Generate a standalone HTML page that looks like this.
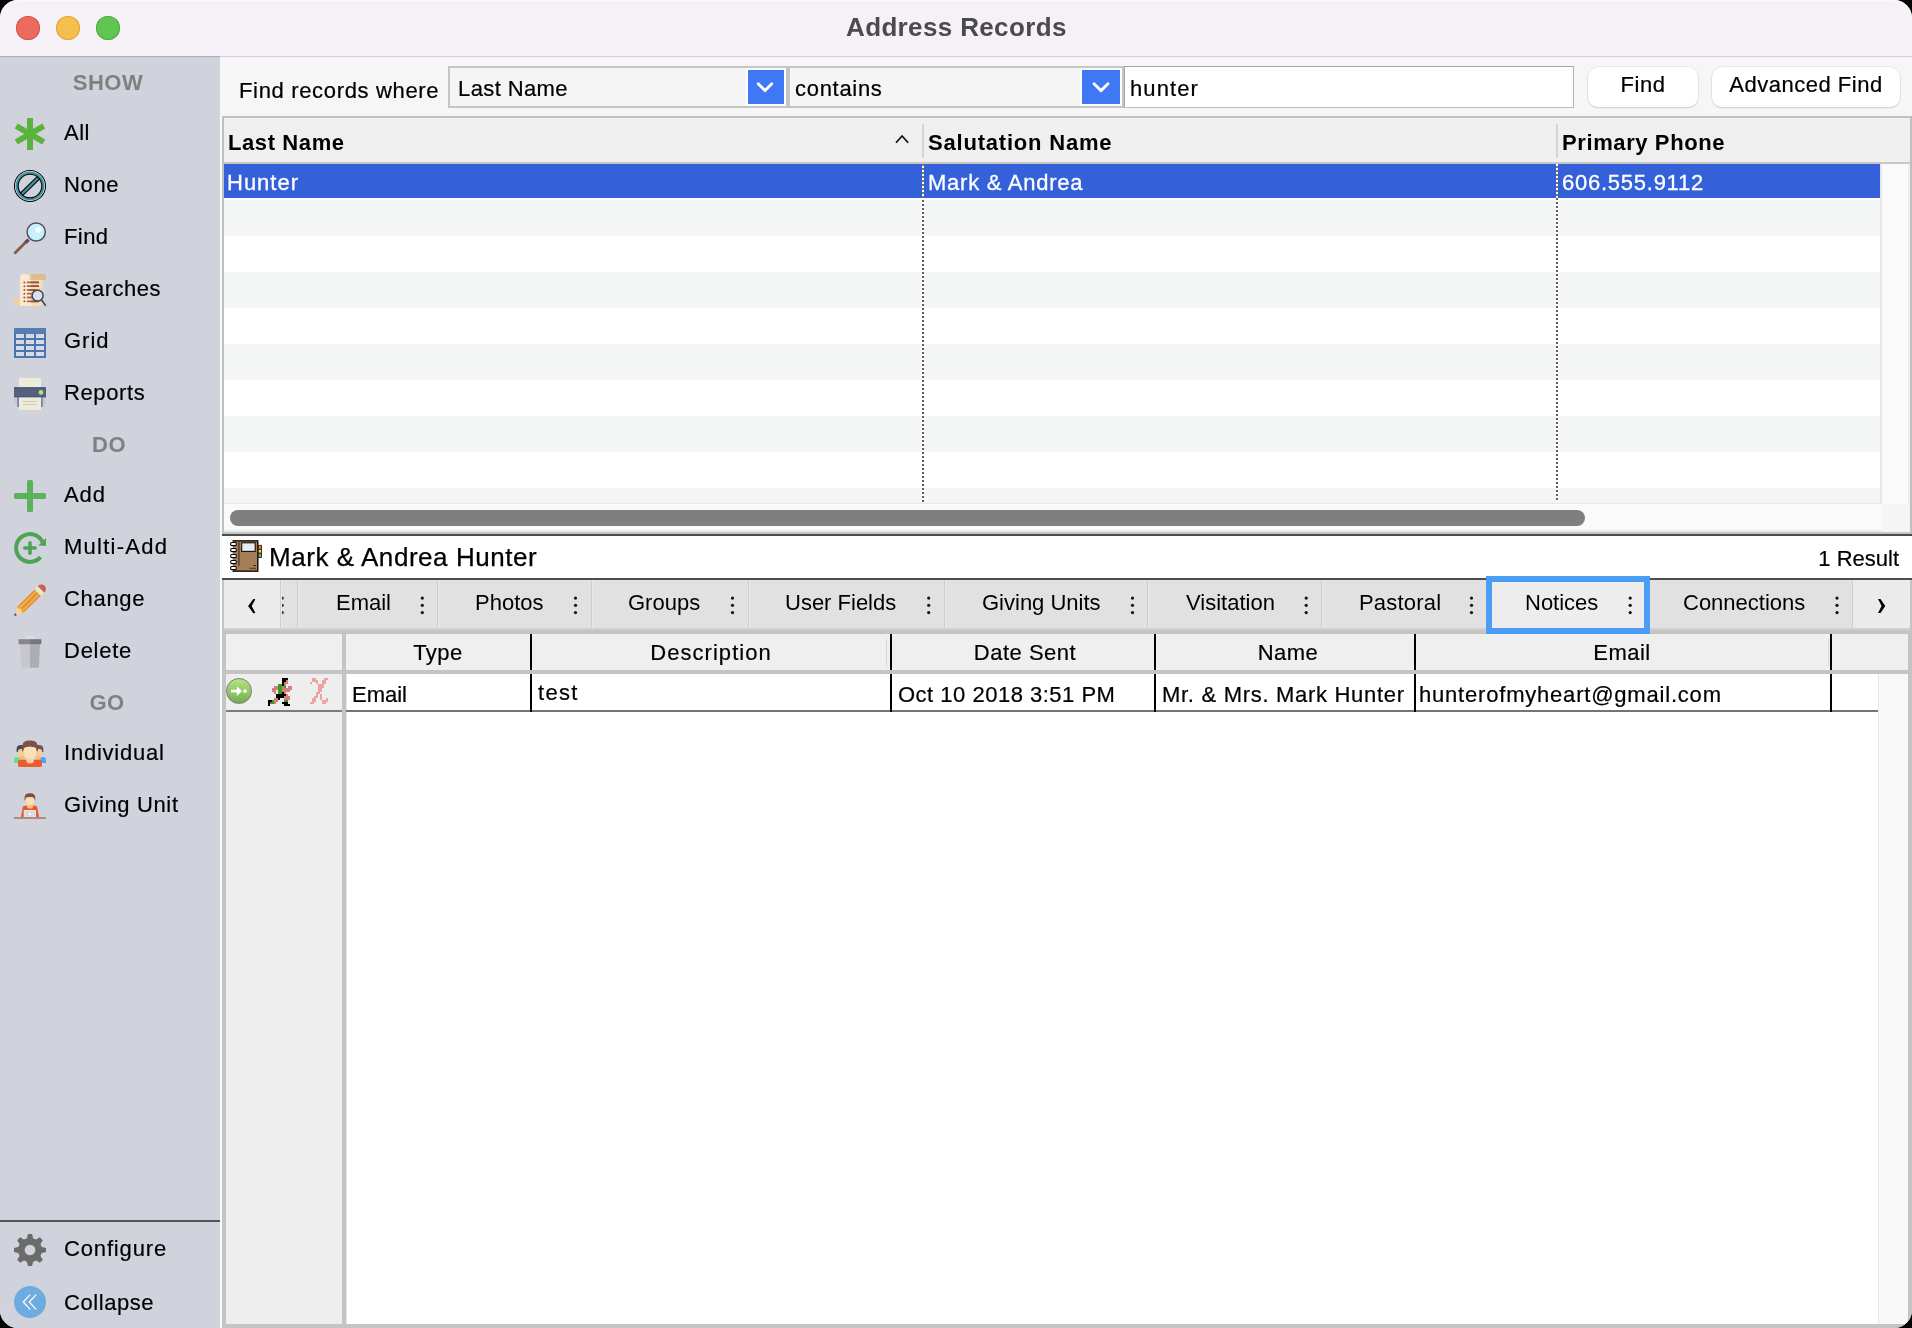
<!DOCTYPE html>
<html>
<head>
<meta charset="utf-8">
<title>Address Records</title>
<style>
*{box-sizing:border-box;margin:0;padding:0}
html,body{width:1912px;height:1328px;overflow:hidden;background:#000}
body{font-family:"Liberation Sans",sans-serif;color:#000;position:relative}
#win{will-change:transform;position:absolute;left:0;top:0;width:1912px;height:1328px;border-radius:18px;overflow:hidden;background:#efefef}
.a{position:absolute}
.t{position:absolute;white-space:nowrap;line-height:1}
/* title bar */
#tb{left:0;top:0;width:1912px;height:56px;background:linear-gradient(#fcfbfc 0,#f5f1f7 2px,#f5f1f7 100%)}
#tbl{left:0;top:56px;width:1912px;height:1px;background:linear-gradient(90deg,#a7aebb 0,#a7aebb 220px,#d2d2d2 220px)}
.dot{position:absolute;top:16px;width:24px;height:24px;border-radius:50%}
/* sidebar */
#sb{left:0;top:57px;width:220px;height:1271px;background:#d0d3dc}
.sh{position:absolute;white-space:nowrap;line-height:1;font-weight:bold;font-size:22px;color:#808080;letter-spacing:.5px}
.si{position:absolute;left:64px;white-space:nowrap;line-height:1;font-size:22px;color:#000;-webkit-text-stroke:.2px #000}
.ic{position:absolute;left:14px;width:32px;height:32px}
/* main */
#findbar{left:220px;top:57px;width:1692px;height:60px;background:#f6f6f6}

.fb{font-size:22px;-webkit-text-stroke:.22px #000}
.sel{background:#f5f5f5;border:2px solid #c6c6c6;box-shadow:inset 0 0 0 1px #fbfbfb}
.bbtn{background:#3f78f5}
.pbtn{background:#fff;border-radius:10px;box-shadow:0 0 0 .5px #dcdcdc,0 1px 1.5px rgba(0,0,0,.22)}
.dot1{width:2px;background:repeating-linear-gradient(#5e5e5e 0,#5e5e5e 2px,#fff 2px,#fff 4px)}
.dot2{width:2px;background:repeating-linear-gradient(#7d7560 0,#7d7560 2px,#fff 2px,#fff 4px)}
.lh{font-size:22px;font-weight:bold;letter-spacing:.6px}
.lr{font-size:22px;color:#fff;letter-spacing:1px;-webkit-text-stroke:.3px #fff}
.tdv{top:580px;width:2px;height:48px;background:linear-gradient(90deg,#cdcdcd 0,#cdcdcd 50%,#e9e9e9 50%)}
.tt{top:592px;font-size:22px}
.gv{top:634px;width:2px;height:36px;background:#000}
.gv2{top:674px;width:2px;height:38px;background:#000}
.gh{top:642px;font-size:22px;text-align:center;letter-spacing:.5px;-webkit-text-stroke:.2px #000}
.gr{top:684px;font-size:22px;letter-spacing:.7px;-webkit-text-stroke:.22px #000}
</style>
</head>
<body>
<div id="win">
<!-- TITLEBAR -->
<div id="tb" class="a"></div>
<div id="tbl" class="a"></div>
<div class="dot" style="left:16px;background:#ed6a5e;box-shadow:inset 0 0 0 1px #d9564a"></div>
<div class="dot" style="left:56px;background:#f5bf4f;box-shadow:inset 0 0 0 1px #dfa63a"></div>
<div class="dot" style="left:96px;background:#61c554;box-shadow:inset 0 0 0 1px #4cae3f"></div>
<div class="t" id="title" style="left:846px;top:14px;font-size:26px;font-weight:bold;color:#4b4a4d;letter-spacing:.36px">Address Records</div>

<!-- SIDEBAR -->
<div id="sb" class="a"></div>
<!--SB0--><div class="sh" style="left:0;width:216px;text-align:center;top:72px">SHOW</div>
<div class="sh" style="left:0;width:218px;text-align:center;top:434px">DO</div>
<div class="sh" style="left:0;width:214px;text-align:center;top:692px">GO</div>
<div class="si" style="top:122px;letter-spacing:0.5px">All</div>
<div class="si" style="top:174px;letter-spacing:0.67px">None</div>
<div class="si" style="top:226px;letter-spacing:0.4px">Find</div>
<div class="si" style="top:278px;letter-spacing:0.5px">Searches</div>
<div class="si" style="top:330px;letter-spacing:1px">Grid</div>
<div class="si" style="top:382px;letter-spacing:0.6px">Reports</div>
<div class="si" style="top:484px;letter-spacing:0.95px">Add</div>
<div class="si" style="top:536px;letter-spacing:1.25px">Multi-Add</div>
<div class="si" style="top:588px;letter-spacing:0.68px">Change</div>
<div class="si" style="top:640px;letter-spacing:0.74px">Delete</div>
<div class="si" style="top:742px;letter-spacing:0.78px">Individual</div>
<div class="si" style="top:794px;letter-spacing:0.64px">Giving Unit</div>
<div class="a" style="left:0;top:1220px;width:220px;height:2px;background:#555557"></div>
<div class="si" style="top:1238px;letter-spacing:0.84px">Configure</div>
<div class="si" style="top:1292px;letter-spacing:0.57px">Collapse</div>
<svg class="a" style="left:0;top:0" width="220" height="1328" viewBox="0 0 220 1328">
<!-- All -->
<g stroke="#5ab33c" stroke-width="6" stroke-linecap="butt">
<line x1="30" y1="118" x2="30" y2="150"/>
<line x1="16.2" y1="126" x2="43.8" y2="142"/>
<line x1="16.2" y1="142" x2="43.8" y2="126"/>
</g>
<!-- None -->
<g fill="none">
<line x1="21.44" y1="194.41" x2="38.56" y2="177.59" stroke="#000" stroke-width="4.400"/>
<line x1="21.01" y1="194.83" x2="38.99" y2="177.17" stroke="#418e9d" stroke-width="2.400"/>
<circle cx="30" cy="186" r="15.5" stroke="#000" stroke-width="1.1"/>
<circle cx="30" cy="186" r="14.6" stroke="#a5e3ea" stroke-width="0.9"/>
<circle cx="30" cy="186" r="13.2" stroke="#418e9d" stroke-width="2.2"/>
<circle cx="30" cy="186" r="11.8" stroke="#000" stroke-width="1.1"/>
</g>
<!-- Find -->
<line x1="27.2" y1="240.8" x2="15.2" y2="252.8" stroke="#8c5a4d" stroke-width="2.900" stroke-linecap="round"/>
<line x1="28.6" y1="239.6" x2="25.6" y2="242.6" stroke="#5c4a5e" stroke-width="3.4"/>
<circle cx="36.200" cy="232" r="9.100" fill="#c4f1fb" stroke="#5a4a62" stroke-width="1.500"/>
<circle cx="38.2" cy="229.8" r="2.9" fill="#fff"/>
<!-- Searches -->
<path d="M31 280 h11.400 v23.500 q0 2.500 -2.500 2.500 h-8.900z" fill="#f9dcb5"/>
<path d="M20 277.200 q0 -3.200 3.200 -3.200 h2.800 q3.500 0 3.500 3.500 v2.500 h1.500 v26 h-11z" fill="#fbead0"/>
<path d="M26 274 h17.500 q2.500 0 2.500 2.500 v3.500 h-16.500 v-2.500 q0 -3.500 -3.500 -3.500z" fill="#f1d3a6"/>
<path d="M31 274 h12.500 q2.500 0 2.500 2.500 v3.500 h-15z" fill="#e0bc8d"/>
<path d="M14 298.500 h6 v7.500 h-2.800 q-3.200 0 -3.200 -3.200z" fill="#f3d0a0"/>
<g stroke="#a8694d" stroke-width="1.800" stroke-linecap="round">
<line x1="27.600" y1="282.400" x2="38.200" y2="282.400"/><line x1="27.600" y1="286.200" x2="38.200" y2="286.200"/>
<line x1="27.600" y1="290" x2="35" y2="290"/><line x1="27.600" y1="293.700" x2="33" y2="293.700"/>
<line x1="27.600" y1="297.500" x2="33" y2="297.500"/><line x1="27.600" y1="301.300" x2="38" y2="301.300"/>
</g>
<g stroke="#97583e" stroke-width="1.800" stroke-linecap="round">
<line x1="31.500" y1="282.400" x2="38.200" y2="282.400"/><line x1="31.500" y1="286.200" x2="38.200" y2="286.200"/>
<line x1="31.500" y1="290" x2="35" y2="290"/><line x1="31.500" y1="301.300" x2="38" y2="301.300"/>
</g>
<g fill="#97583e"><circle cx="24.400" cy="282.400" r="1"/><circle cx="24.400" cy="286.200" r="1"/><circle cx="24.400" cy="290" r="1"/><circle cx="24.400" cy="293.700" r="1"/><circle cx="24.400" cy="297.500" r="1"/><circle cx="24.400" cy="301.300" r="1"/></g>
<line x1="41.500" y1="300" x2="45.400" y2="305.200" stroke="#454b54" stroke-width="1.700" stroke-linecap="round"/>
<circle cx="37.600" cy="295.600" r="5.500" fill="#dce1f2" stroke="#454b54" stroke-width="1.600"/>
<!-- Grid -->
<rect x="14" y="328" width="32" height="30" fill="#4a74ae"/>
<rect x="14" y="328" width="32" height="5.500" fill="#567eb4"/>
<g fill="#d5d9e2" stroke="#e6e7ec" stroke-width="0.800">
<rect x="16.400" y="334.400" width="7.200" height="3.200"/><rect x="26.400" y="334.400" width="7.200" height="3.200"/><rect x="36.400" y="334.400" width="7.200" height="3.200"/>
<rect x="16.400" y="340.400" width="7.200" height="3.200"/><rect x="26.400" y="340.400" width="7.200" height="3.200"/><rect x="36.400" y="340.400" width="7.200" height="3.200"/>
<rect x="16.400" y="346.400" width="7.200" height="3.200"/><rect x="26.400" y="346.400" width="7.200" height="3.200"/><rect x="36.400" y="346.400" width="7.200" height="3.200"/>
<rect x="16.400" y="352.400" width="7.200" height="3.200"/><rect x="26.400" y="352.400" width="7.200" height="3.200"/><rect x="36.400" y="352.400" width="7.200" height="3.200"/>
</g>
<!-- Reports -->
<rect x="19" y="378" width="22" height="10" fill="#edebda"/>
<rect x="14" y="397" width="3.500" height="8" fill="#c9cbc6"/><rect x="42.500" y="397" width="3.500" height="8" fill="#c9cbc6"/>
<rect x="17.200" y="397" width="2" height="10" fill="#7583c0"/><rect x="40.800" y="397" width="2" height="10" fill="#7583c0"/>
<rect x="19" y="397" width="22" height="13" fill="#edebda"/>
<rect x="14" y="387.300" width="32" height="9.900" fill="#555f80"/>
<rect x="14" y="387.300" width="32" height="1.200" fill="#4a5478"/><rect x="14" y="396" width="32" height="1.200" fill="#4a5478"/>
<circle cx="41" cy="392.400" r="2.300" fill="#aeea6a"/>
<rect x="23" y="401.100" width="14" height="1" fill="#cfcaa8"/><rect x="23" y="404" width="14" height="1" fill="#cfcaa8"/>
<!-- Add -->
<rect x="14" y="493" width="32" height="6" rx="1.500" fill="#5cb25a"/>
<rect x="27" y="480" width="6" height="32" rx="1.500" fill="#5cb25a"/>
<!-- Multi-Add -->
<path d="M42.640 542.210 A13.900 13.900 0 1 0 40.490 557.120" fill="none" stroke="#4ea356" stroke-width="4"/>
<path d="M46 538 L46 546 L38.300 545.600 Z" fill="#4ea356"/>
<g stroke="#4ea356" stroke-width="3.500" stroke-linecap="round"><line x1="24.800" y1="548" x2="35.200" y2="548"/><line x1="30" y1="542.800" x2="30" y2="553.200"/></g>
<!-- Change (pencil) -->
<g transform="translate(14 616) rotate(-44.500)">
<path d="M0 0 L9.500 -4.500 L9.500 4.500 Z" fill="#f7cfa4"/>
<path d="M0 0 L2.800 -1.300 L2.800 1.300 Z" fill="#3d4650"/>
<rect x="9.500" y="-4.500" width="24" height="9" fill="#e8913a"/>
<path d="M7.800 -4.500 L11 -4.500 L9.500 -1.600 L11.600 0 L9.500 1.600 L11 4.500 L7.800 4.500 L8.400 1.600 L10 0 L8.400 -1.600Z" fill="#e5b93a"/>
<rect x="10.500" y="-2.500" width="23" height="1.100" fill="#e8c555"/><rect x="10.500" y="1.400" width="23" height="1.100" fill="#e8c555"/>
<rect x="33.500" y="-4.500" width="4.500" height="9" fill="#d9dbd2"/>
<rect x="33.500" y="-4.500" width="1.100" height="9" fill="#f7f0c0"/><rect x="35.600" y="-4.500" width="1.100" height="9" fill="#f7f0c0"/>
<path d="M38 -4.500 h0.500 a4.500 4.500 0 0 1 0 9 h-0.500z" fill="#cc5e4e"/>
</g>
<!-- Delete -->
<rect x="25.300" y="636" width="9.200" height="3.500" fill="#dcdcdc"/>
<path d="M19.900 644 H30 V667.800 H21.300Z" fill="#c8c7cc"/><path d="M30 644 H40 L38.900 667.800 H30Z" fill="#aeadb3"/>
<rect x="18.500" y="639.200" width="11.500" height="5" fill="#86868e"/><rect x="30" y="639.200" width="11.300" height="5" fill="#767480"/>
<!-- Individual -->
<path d="M14 763 v-3 q0 -3 3 -3 h3 l3 2 v4z" fill="#62e08e"/>
<path d="M46 763 v-3 q0 -3 -3 -3 h-3 l-3 2 v4z" fill="#4aa3f7"/>
<path d="M16.600 752 v-3 q0 -4 4 -4 h3 v7z" fill="#4a4761"/><path d="M43.400 752 v-3 q0 -4 -4 -4 h-3 v7z" fill="#735560"/>
<rect x="18" y="749" width="7" height="9" rx="2.500" fill="#f8cd95"/><rect x="35" y="749" width="7" height="9" rx="2.500" fill="#f8cd95"/>
<rect x="19.500" y="756" width="5" height="4" fill="#f4b98a"/><rect x="35.500" y="756" width="5" height="4" fill="#f4b98a"/>
<rect x="18" y="759.800" width="24" height="7.200" rx="2" fill="#ec5a2e"/>
<path d="M26.300 757 h7.500 v4 q0 2.500 -3.750 2.500 q-3.750 0 -3.750 -2.500z" fill="#f8d2a4"/>
<path d="M22 751.500 v-4 q0 -7 7 -7 h2 q7 0 7 7 v4 q-1.500 0 -2 -3.500 q-6 -2.500 -12 0 q-0.500 3.500 -2 3.500z" fill="#7d5145"/>
<path d="M23.900 748.200 q6 -2.800 12.100 0 v5 q0 5.300 -6.050 5.300 q-6.050 0 -6.050 -5.300z" fill="#fbe2b6"/>
<!-- Giving Unit -->
<path d="M22.500 808.500 q0 -2.700 2.700 -2.700 h9.600 q2.700 0 2.700 2.700 l1.500 8.500 h-18z" fill="#ec5829"/>
<path d="M27 803 h6 v3.500 q0 2 -3 2 q-3 0 -3 -2z" fill="#f6c18d"/>
<path d="M24.500 800.500 v-2.300 q0 -5 5 -5 h0.800 q5 0 5 5 v2.300 q-1 0 -1.300 -2.500 q-4.100 -1.600 -8.200 0 q-0.300 2.500 -1.300 2.500z" fill="#7b4f44"/>
<path d="M25.800 798 q4.200 -1.800 8.400 0 v3 q0 4 -4.200 4 q-4.200 0 -4.200 -4z" fill="#fbe0ae"/>
<rect x="23.700" y="810" width="12.300" height="7" fill="#dde6f0"/><rect x="24.700" y="811" width="10.300" height="5.500" fill="#d8dbe2"/>
<rect x="29" y="813" width="2" height="2" fill="#fff"/>
<rect x="14" y="817" width="32" height="2" fill="#b08983"/>
<!-- Configure gear -->
<g fill="#6b6b6b" transform="translate(30 1250)">
<path d="M-3.300 -11 L-2.100 -16 H2.100 L3.300 -11Z"/>
<path transform="rotate(45)" d="M-3.300 -11 L-2.100 -16 H2.100 L3.300 -11Z"/><path transform="rotate(90)" d="M-3.300 -11 L-2.100 -16 H2.100 L3.300 -11Z"/><path transform="rotate(135)" d="M-3.300 -11 L-2.100 -16 H2.100 L3.300 -11Z"/>
<path transform="rotate(180)" d="M-3.300 -11 L-2.100 -16 H2.100 L3.300 -11Z"/><path transform="rotate(225)" d="M-3.300 -11 L-2.100 -16 H2.100 L3.300 -11Z"/><path transform="rotate(270)" d="M-3.300 -11 L-2.100 -16 H2.100 L3.300 -11Z"/><path transform="rotate(315)" d="M-3.300 -11 L-2.100 -16 H2.100 L3.300 -11Z"/>
<path fill-rule="evenodd" d="M0 -12 A12 12 0 1 0 0.010 -12Z M0 -5.300 A5.300 5.300 0 1 1 -0.010 -5.300Z"/>
</g>
<!-- Collapse -->
<circle cx="30" cy="1302" r="16" fill="#6eacdf"/>
<g fill="none" stroke="#fff" stroke-width="1.200" stroke-linecap="round" stroke-linejoin="round">
<path d="M29.900 1294.900 L23.300 1302 L29.900 1309.200"/><path d="M35.900 1294.900 L29.300 1302 L35.900 1309.200"/>
</g>
</svg>
<!--SB1-->

<div class="a" style="left:220px;top:116px;width:2px;height:1212px;background:#fafafa"></div>
<!-- FINDBAR -->
<div id="findbar" class="a"></div>
<!--M0--><!-- find bar -->
<div class="t fb" style="left:239px;top:80px;letter-spacing:.66px">Find records where</div>
<div class="a" style="left:448px;top:66px;width:676px;height:42px;background:#f5f5f5;border:2px solid #c5c5c5"></div>
<div class="a" style="left:786px;top:68px;width:4px;height:38px;background:#c5c5c5"></div>
<div class="a" style="left:746px;top:68px;width:40px;height:38px;background:#fefefe"></div>
<div class="a" style="left:1080px;top:68px;width:42px;height:38px;background:#fefefe"></div>
<div class="t fb" style="left:458px;top:78px;letter-spacing:.4px">Last Name</div>
<div class="a bbtn" style="left:748px;top:70px;width:36px;height:34px"><svg width="36" height="34" viewBox="0 0 36 34"><path d="M10.200 13.700 L17 20.600 L23.800 13.700" fill="none" stroke="#fff" stroke-width="2.900" stroke-linecap="round" stroke-linejoin="round"/></svg></div>
<div class="t fb" style="left:795px;top:78px;letter-spacing:.7px">contains</div>
<div class="a bbtn" style="left:1082px;top:70px;width:38px;height:34px"><svg width="38" height="34" viewBox="0 0 38 34"><path d="M12 13.700 L19 20.600 L26 13.700" fill="none" stroke="#fff" stroke-width="2.900" stroke-linecap="round" stroke-linejoin="round"/></svg></div>
<div class="a" style="left:1124px;top:66px;width:450px;height:42px;background:#fff;border:1.500px solid #a6a6a6;border-bottom-color:#bcbcbc;border-right-color:#b4b4b4"></div>
<div class="t fb" style="left:1130px;top:78px;letter-spacing:1.100px">hunter</div>
<div class="a pbtn" style="left:1588px;top:67px;width:110px;height:40px"></div>
<div class="t fb" style="left:1588px;width:110px;text-align:center;top:74px;letter-spacing:.5px;padding-left:0px">Find</div>
<div class="a pbtn" style="left:1712px;top:67px;width:188px;height:40px"></div>
<div class="t fb" style="left:1712px;width:188px;text-align:center;top:74px;letter-spacing:.5px">Advanced Find</div>

<!-- list -->
<div class="a" style="left:222px;top:116px;width:1690px;height:418px;background:#c0c0c0"></div>
<div class="a" style="left:224px;top:118px;width:1686px;height:45px;background:#efefef;border-top:1px solid #f4f4f4"></div>
<div class="a" style="left:224px;top:162px;width:1686px;height:2px;background:#c9c8c6"></div>
<div class="a" style="left:224px;top:164px;width:1656px;height:340px;background:repeating-linear-gradient(#fff 0,#fff 36px,#f4f5f5 36px,#f4f5f5 72px)"></div>
<div class="a" style="left:224px;top:164px;width:1656px;height:34px;background:#3461d9"></div>
<div class="a" style="left:1880px;top:164px;width:30px;height:340px;background:#fafafa;border-left:2px solid #e8e8e8;border-right:2px solid #eeeeee"></div>
<div class="a" style="left:224px;top:503px;width:1658px;height:29px;background:#fafafa;border-top:1px solid #e8e8e8"></div>
<div class="a" style="left:224px;top:530px;width:1658px;height:2px;background:#ececec"></div><div class="a" style="left:1882px;top:504px;width:28px;height:28px;background:#f5f5f5"></div><div class="a" style="left:224px;top:532px;width:1686px;height:2px;background:#c6c6c6"></div>
<div class="a" style="left:230px;top:510px;width:1355px;height:16px;border-radius:8px;background:#7f7f7f"></div>
<div class="a" style="left:922px;top:124px;width:2px;height:34px;background:#d4d4d4"></div>
<div class="a" style="left:1556px;top:124px;width:2px;height:34px;background:#d4d4d4"></div>
<div class="a dot1" style="left:922px;top:164px;height:338px"></div>
<div class="a" style="left:1556px;top:164px;height:338px;width:2px;background:repeating-linear-gradient(#fff 0,#fff 2px,#5e5e5e 2px,#5e5e5e 4px)"></div>
<div class="a dot2" style="left:922px;top:164px;height:34px"></div>
<div class="a" style="left:1556px;top:164px;height:34px;width:2px;background:repeating-linear-gradient(#fff 0,#fff 2px,#7d7560 2px,#7d7560 4px)"></div>
<div class="t lh" style="left:228px;top:132px">Last Name</div>
<div class="t lh" style="left:928px;top:132px;letter-spacing:.8px">Salutation Name</div>
<div class="t lh" style="left:1562px;top:132px">Primary Phone</div>
<svg class="a" style="left:894px;top:133px" width="16" height="12" viewBox="0 0 16 12"><path d="M2 9.800 L8.100 3 L14.200 9.800" fill="none" stroke="#111" stroke-width="1.700" stroke-linejoin="miter"/></svg>
<div class="t lr" style="left:227px;top:172px">Hunter</div>
<div class="t lr" style="left:928px;top:172px;letter-spacing:.75px">Mark &amp; Andrea</div>
<div class="t lr" style="left:1562px;top:172px;letter-spacing:.75px">606.555.9112</div>

<!-- name bar -->
<div class="a" style="left:222px;top:534px;width:1690px;height:2px;background:#4c4c4c"></div>
<div class="a" style="left:222px;top:536px;width:1690px;height:42px;background:#fff"></div>
<div class="a" style="left:222px;top:578px;width:1690px;height:2px;background:#4c4c4c"></div>
<div class="t" style="left:269px;top:544px;font-size:26px;letter-spacing:.55px;-webkit-text-stroke:.25px #000">Mark &amp; Andrea Hunter</div>
<div class="t" style="right:13px;top:548px;font-size:22px;letter-spacing:0px;-webkit-text-stroke:.2px #000">1 Result</div>
<svg class="a" style="left:229px;top:539px" width="34" height="34" viewBox="229 539 34 34">
<rect x="258" y="545.300" width="3.500" height="4" fill="#f07a32" stroke="#1a1208" stroke-width=".8"/>
<rect x="258" y="549.300" width="3.500" height="3.900" fill="#fbd65c" stroke="#1a1208" stroke-width=".8"/>
<rect x="258" y="553.200" width="3.500" height="4.300" fill="#5cb85c" stroke="#1a1208" stroke-width=".8"/>
<rect x="232.800" y="540.300" width="25.500" height="31.400" fill="#a47f58"/>
<path d="M232.500 540.800 H257.800 V571.200 H232.500" fill="none" stroke="#000" stroke-width="1.200" stroke-linejoin="round"/>
<rect x="238.100" y="541.400" width="1.600" height="24.400" fill="#5a4330"/>
<rect x="241.700" y="542.800" width="13.500" height="8.600" fill="#e8ecee" stroke="#14100c" stroke-width="1.100"/>
<line x1="253.200" y1="565.500" x2="256" y2="565.500" stroke="#2e2014" stroke-width="1"/><line x1="249.500" y1="568.300" x2="256" y2="568.300" stroke="#4a331f" stroke-width="1"/>
<g fill="#fff" stroke="#000" stroke-width="1.100"><rect x="230.700" y="542.500" width="5.600" height="3.100" rx="1.100"/><rect x="230.700" y="548.500" width="5.600" height="3.100" rx="1.100"/><rect x="230.700" y="554.500" width="5.600" height="3.100" rx="1.100"/><rect x="230.700" y="560.500" width="5.600" height="3.100" rx="1.100"/><rect x="230.700" y="566.500" width="5.600" height="3.100" rx="1.100"/></g>
</svg>
<!--M1-->

<!-- LIST -->
<!--LIST-->

<!-- NAMEBAR -->
<!--NAMEBAR-->

<!-- TABS -->
<!--T0--><!-- tabs -->
<div class="a" style="left:222px;top:580px;width:1690px;height:54px;background:#c4c4c4"></div>
<div class="a" style="left:224px;top:580px;width:1686px;height:48px;background:#e1e1e1"></div>
<div class="a" style="left:224px;top:628px;width:1686px;height:2px;background:#d0d0d0"></div>
<div class="a" style="left:224px;top:580px;width:57px;height:48px;background:#ebebeb"></div>
<div class="a" style="left:1853px;top:580px;width:57px;height:48px;background:#ebebeb"></div>
<div class="a tdv" style="left:280px"></div><div class="a tdv" style="left:297px"></div><div class="a tdv" style="left:437px"></div><div class="a tdv" style="left:591px"></div><div class="a tdv" style="left:748px"></div><div class="a tdv" style="left:944px"></div><div class="a tdv" style="left:1147px"></div><div class="a tdv" style="left:1321px"></div><div class="a tdv" style="left:1852px"></div>
<div class="a" style="left:1486px;top:576px;width:164px;height:58px;background:#ededed;border:6px solid #4a9cf5"></div>
<div class="t tt" style="left:336px">Email</div><div class="t tt" style="left:475px">Photos</div><div class="t tt" style="left:628px">Groups</div><div class="t tt" style="left:785px">User Fields</div><div class="t tt" style="left:982px">Giving Units</div><div class="t tt" style="left:1186px">Visitation</div><div class="t tt" style="left:1359px;letter-spacing:.2px">Pastoral</div><div class="t tt" style="left:1525px">Notices</div><div class="t tt" style="left:1683px">Connections</div>
<svg class="a" style="left:222px;top:580px" width="1690" height="48" viewBox="222 580 1690 48">

<g fill="#111">
<circle cx="422.300" cy="598.100" r="1.600"/><circle cx="422.300" cy="605.300" r="1.600"/><circle cx="422.300" cy="612.600" r="1.600"/><circle cx="575.500" cy="598.100" r="1.600"/><circle cx="575.500" cy="605.300" r="1.600"/><circle cx="575.500" cy="612.600" r="1.600"/><circle cx="732.500" cy="598.100" r="1.600"/><circle cx="732.500" cy="605.300" r="1.600"/><circle cx="732.500" cy="612.600" r="1.600"/><circle cx="928.700" cy="598.100" r="1.600"/><circle cx="928.700" cy="605.300" r="1.600"/><circle cx="928.700" cy="612.600" r="1.600"/><circle cx="1132.500" cy="598.100" r="1.600"/><circle cx="1132.500" cy="605.300" r="1.600"/><circle cx="1132.500" cy="612.600" r="1.600"/><circle cx="1306.200" cy="598.100" r="1.600"/><circle cx="1306.200" cy="605.300" r="1.600"/><circle cx="1306.200" cy="612.600" r="1.600"/><circle cx="1471.500" cy="598.100" r="1.600"/><circle cx="1471.500" cy="605.300" r="1.600"/><circle cx="1471.500" cy="612.600" r="1.600"/><circle cx="1630.200" cy="598.100" r="1.600"/><circle cx="1630.200" cy="605.300" r="1.600"/><circle cx="1630.200" cy="612.600" r="1.600"/><circle cx="1837" cy="598.100" r="1.600"/><circle cx="1837" cy="605.300" r="1.600"/><circle cx="1837" cy="612.600" r="1.600"/>
<path d="M282.200 596.500 a1.600 1.600 0 0 1 0 3.200z M282.200 603.700 a1.600 1.600 0 0 1 0 3.200z M282.200 611 a1.600 1.600 0 0 1 0 3.200z"/>
</g>
<path d="M248.100 606.100 L253.300 599 L255.400 599.200 L251.700 606.100 L255.400 613 L253.300 613.200Z" fill="#000"/>
<path d="M1878 599.100 L1880.500 599.100 L1885.300 606 L1880.500 613 L1878 613 L1881.600 606Z" fill="#000"/>
</svg>
<!--T1-->

<!-- GRID -->
<!--G0--><!-- grid -->
<div class="a" style="left:222px;top:634px;width:1690px;height:694px;background:#c4c4c4"></div>
<div class="a" style="left:226px;top:634px;width:1682px;height:36px;background:#efefef"></div>
<div class="a" style="left:226px;top:674px;width:116px;height:650px;background:#eeeeee"></div>
<div class="a" style="left:346px;top:674px;width:1532px;height:650px;background:#fff;border-left:1px solid #e6e6e6"></div>
<div class="a" style="left:1878px;top:674px;width:30px;height:650px;background:#f8f8f8;border-left:1px solid #e8e8e8"></div>
<div class="a" style="left:226px;top:710px;width:116px;height:2px;background:#7c7c7c"></div>
<div class="a" style="left:346px;top:710px;width:1532px;height:2px;background:#747474"></div>
<div class="a" style="left:342px;top:634px;width:4px;height:36px;background:#c4c4c4"></div><div class="a gv" style="left:530px"></div><div class="a gv" style="left:890px"></div><div class="a gv" style="left:1154px"></div><div class="a gv" style="left:1414px"></div><div class="a gv" style="left:1830px"></div>
<div class="a gv2" style="left:530px"></div><div class="a gv2" style="left:890px"></div><div class="a gv2" style="left:1154px"></div><div class="a gv2" style="left:1414px"></div><div class="a gv2" style="left:1830px"></div>
<div class="a" style="left:886px;top:639px;width:1px;height:28px;background:#d4d4d4"></div><div class="a" style="left:1828px;top:639px;width:1px;height:28px;background:#d8d8d8"></div>
<div class="t gh" style="left:346px;width:184px">Type</div><div class="t gh" style="left:532px;width:358px;letter-spacing:1.05px">Description</div><div class="t gh" style="left:892px;width:266px">Date Sent</div><div class="t gh" style="left:1156px;width:264px">Name</div><div class="t gh" style="left:1416px;width:412px">Email</div>
<div class="t gr" style="left:352px;letter-spacing:0">Email</div><div class="t gr" style="left:538px;top:682px;letter-spacing:1.3px">test</div><div class="t gr" style="left:898px;letter-spacing:.5px">Oct 10 2018 3:51 PM</div><div class="t gr" style="left:1162px">Mr. &amp; Mrs. Mark Hunter</div><div class="t gr" style="left:1419px;letter-spacing:.8px">hunterofmyheart@gmail.com</div>
<div class="a" style="left:226.100px;top:678.100px;width:25.800px;height:25.800px;border-radius:50%;border:1px solid #7b7b80;background:linear-gradient(#b4e47e,#74ae50)"></div>
<svg class="a" style="left:226px;top:676px" width="110" height="32" viewBox="226 676 110 32">
<rect x="231" y="689.800" width="6.500" height="2.700" fill="#fff"/><path d="M236.900 686.200 L241.900 691.100 L236.900 696Z" fill="#fff"/><circle cx="245" cy="691.100" r="1.900" fill="#fff"/>
<g shape-rendering="crispEdges"><rect x="282" y="678" width="6" height="2" fill="#000"/><rect x="282" y="680" width="4" height="2" fill="#000"/><rect x="286" y="680" width="2" height="2" fill="#d4807c"/><rect x="282" y="682" width="2" height="2" fill="#000"/><rect x="284" y="682" width="4" height="2" fill="#d4807c"/><rect x="278" y="684" width="4" height="2" fill="#3a9a25"/><rect x="282" y="684" width="2" height="2" fill="#000"/><rect x="284" y="684" width="2" height="2" fill="#d4807c"/><rect x="274" y="686" width="4" height="2" fill="#d4807c"/><rect x="278" y="686" width="4" height="2" fill="#3a9a25"/><rect x="282" y="686" width="2" height="2" fill="#d4807c"/><rect x="284" y="686" width="2" height="2" fill="#3a9a25"/><rect x="288" y="686" width="4" height="2" fill="#d4807c"/><rect x="272" y="688" width="6" height="2" fill="#d4807c"/><rect x="278" y="688" width="4" height="2" fill="#3a9a25"/><rect x="282" y="688" width="10" height="2" fill="#d4807c"/><rect x="272" y="690" width="4" height="2" fill="#d4807c"/><rect x="278" y="690" width="4" height="2" fill="#3a9a25"/><rect x="282" y="690" width="8" height="2" fill="#d4807c"/><rect x="274" y="692" width="2" height="2" fill="#d4807c"/><rect x="278" y="692" width="4" height="2" fill="#3a9a25"/><rect x="282" y="692" width="2" height="2" fill="#000"/><rect x="284" y="692" width="2" height="2" fill="#d4807c"/><rect x="276" y="694" width="10" height="2" fill="#000"/><rect x="286" y="694" width="2" height="2" fill="#d4807c"/><rect x="276" y="696" width="8" height="2" fill="#000"/><rect x="284" y="696" width="6" height="2" fill="#d4807c"/><rect x="274" y="698" width="4" height="2" fill="#d4807c"/><rect x="278" y="698" width="2" height="2" fill="#000"/><rect x="284" y="698" width="6" height="2" fill="#d4807c"/><rect x="268" y="700" width="4" height="2" fill="#000"/><rect x="272" y="700" width="2" height="2" fill="#3a9a25"/><rect x="274" y="700" width="4" height="2" fill="#d4807c"/><rect x="284" y="700" width="4" height="2" fill="#3a9a25"/><rect x="268" y="702" width="2" height="2" fill="#000"/><rect x="270" y="702" width="4" height="2" fill="#3a9a25"/><rect x="274" y="702" width="2" height="2" fill="#d4807c"/><rect x="282" y="702" width="6" height="2" fill="#000"/><rect x="268" y="704" width="2" height="2" fill="#000"/><rect x="284" y="704" width="6" height="2" fill="#000"/><rect x="312" y="678" width="4" height="2" fill="#eea49c"/><rect x="324" y="678" width="4" height="2" fill="#eea49c"/><rect x="312" y="680" width="6" height="2" fill="#eea49c"/><rect x="322" y="680" width="4" height="2" fill="#eea49c"/><rect x="310" y="682" width="2" height="2" fill="#eea49c"/><rect x="316" y="682" width="2" height="2" fill="#eea49c"/><rect x="322" y="682" width="4" height="2" fill="#eea49c"/><rect x="318" y="684" width="6" height="2" fill="#eea49c"/><rect x="318" y="686" width="6" height="2" fill="#eea49c"/><rect x="318" y="688" width="4" height="2" fill="#eea49c"/><rect x="318" y="690" width="4" height="2" fill="#eea49c"/><rect x="316" y="692" width="4" height="2" fill="#eea49c"/><rect x="316" y="694" width="2" height="2" fill="#eea49c"/><rect x="320" y="694" width="2" height="2" fill="#eea49c"/><rect x="314" y="696" width="4" height="2" fill="#eea49c"/><rect x="320" y="696" width="2" height="2" fill="#eea49c"/><rect x="312" y="698" width="4" height="2" fill="#eea49c"/><rect x="320" y="698" width="2" height="2" fill="#eea49c"/><rect x="326" y="698" width="2" height="2" fill="#eea49c"/><rect x="312" y="700" width="4" height="2" fill="#eea49c"/><rect x="322" y="700" width="6" height="2" fill="#eea49c"/><rect x="310" y="702" width="4" height="2" fill="#eea49c"/><rect x="322" y="702" width="4" height="2" fill="#eea49c"/></g>
</svg>
<!--G1-->

</div>
</body>
</html>
